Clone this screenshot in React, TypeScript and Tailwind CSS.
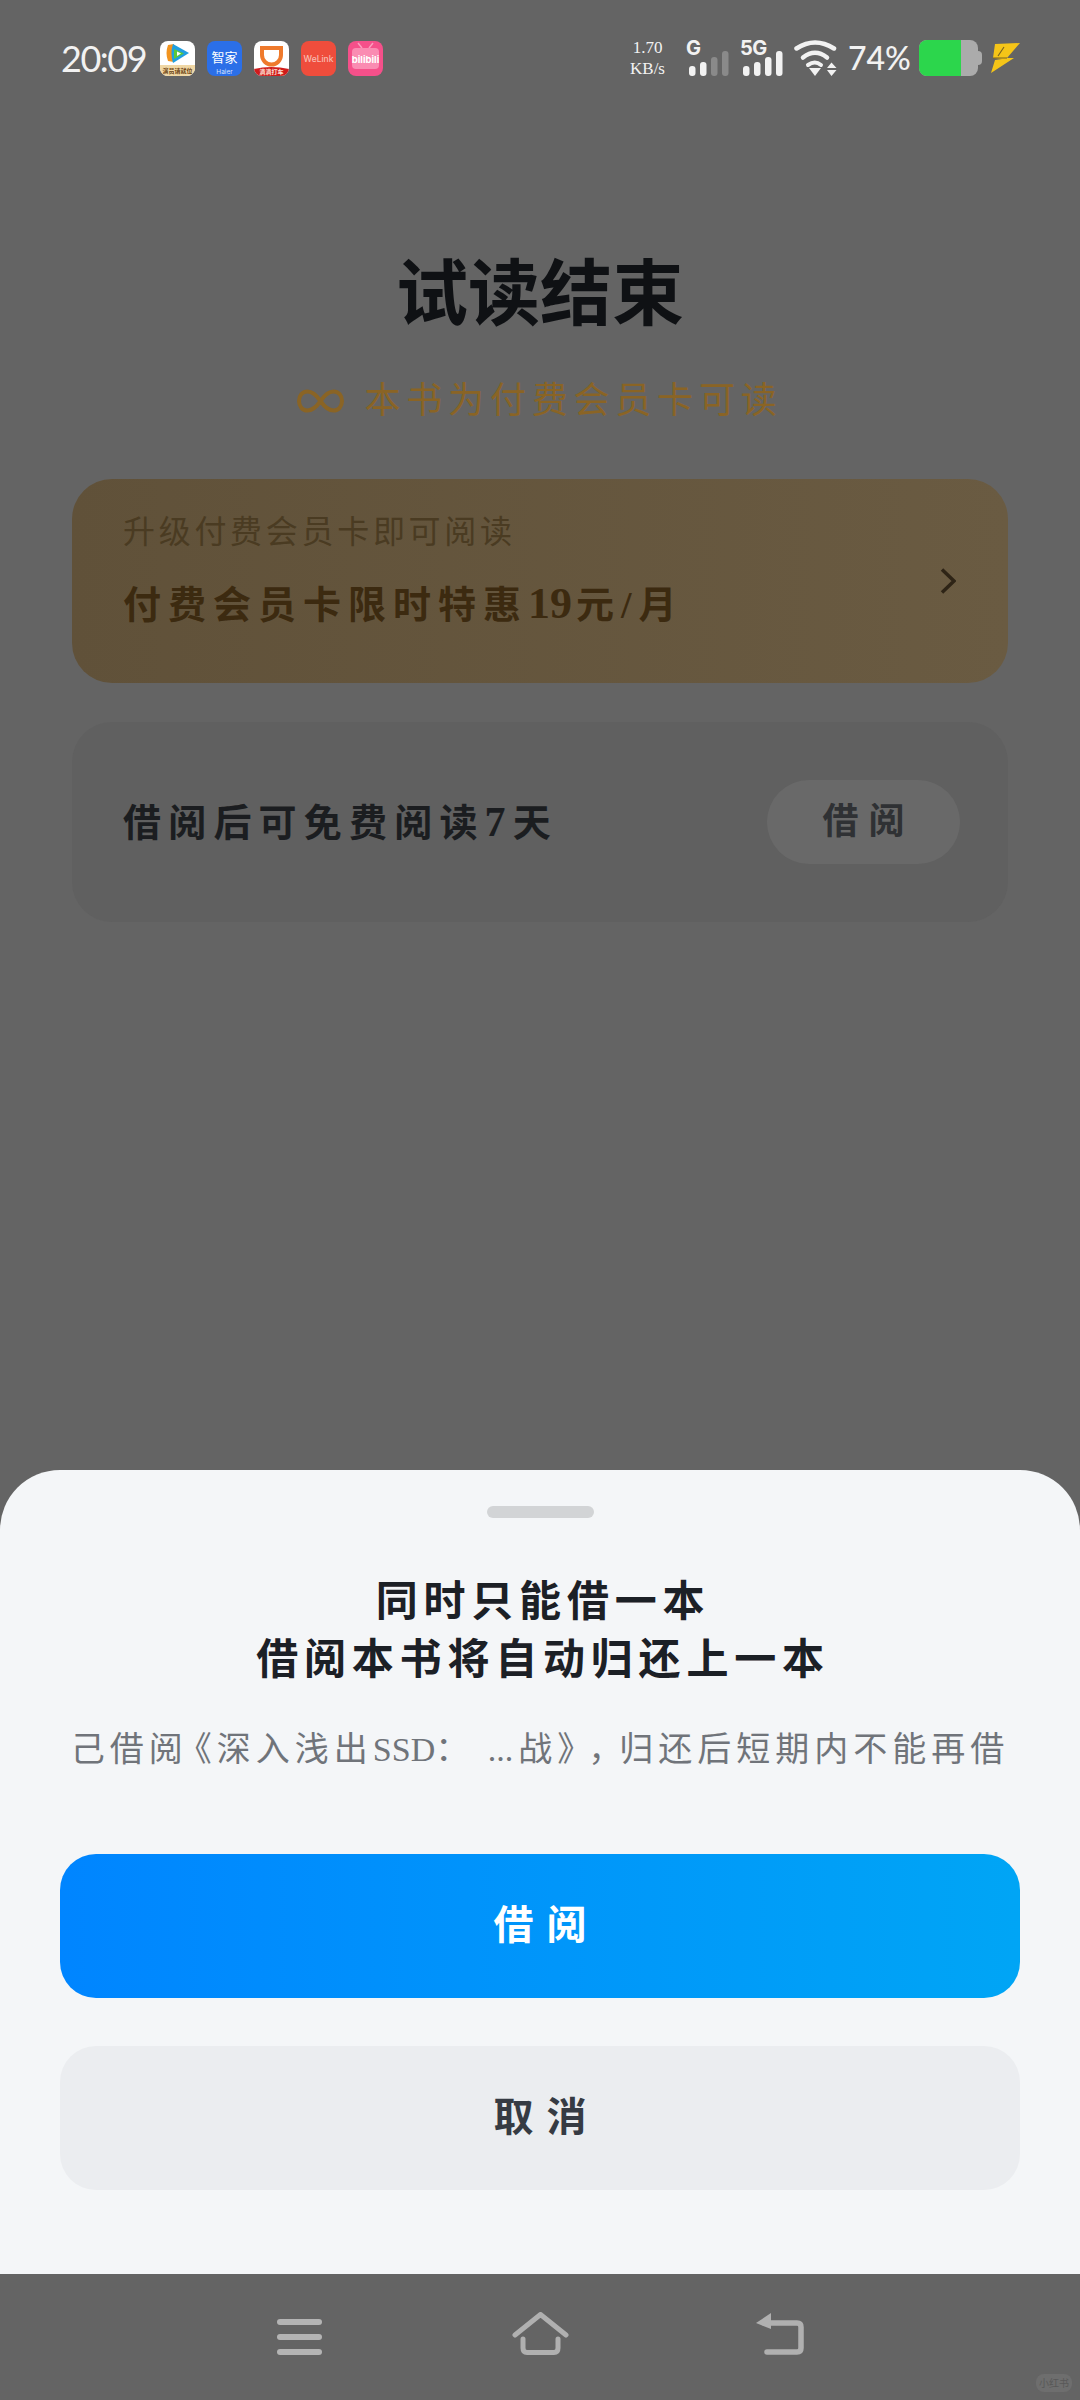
const serif = "font-['Liberation_Serif','Noto_Sans_CJK_SC',serif]";

function TencentIcon() {
  return (
    <svg width="35" height="35" viewBox="0 0 35 35" className="rounded-lg">
      <rect width="35" height="35" fill="#ffffff" />
      <path d="M8 4 L14 3 Q11 12 14 21 L8 20 Q5 12 8 4 Z" fill="#f2941f" />
      <path d="M13 3 L29 12 L13 22 Q10 12 13 3 Z" fill="#1f9fe0" />
      <path d="M14 8 L24 12.5 L14 18 Z" fill="#5cc83a" />
      <path d="M17 10.5 L21 12.5 L17 15 Z" fill="#ffffff" />
      <rect y="24" width="35" height="11" fill="#f0d7a4" />
      <text x="17.5" y="31.5" textAnchor="middle" fontSize="6" fontWeight="700" fill="#6b4212" fontFamily="Noto Sans CJK SC">
        演员请就位
      </text>
    </svg>
  );
}

function HaierIcon() {
  return (
    <svg width="35" height="35" viewBox="0 0 35 35" className="rounded-lg">
      <rect width="35" height="35" fill="#2b6fe8" />
      <text x="17.5" y="21" textAnchor="middle" fontSize="13" fill="#ffffff" fontFamily="Noto Sans CJK SC">
        智家
      </text>
      <text x="17.5" y="33" textAnchor="middle" fontSize="6.5" fill="#d5e4ff" fontFamily="Inter">
        Haier
      </text>
    </svg>
  );
}

function DidiIcon() {
  return (
    <svg width="35" height="35" viewBox="0 0 35 35" className="rounded-lg">
      <rect width="35" height="35" fill="#ffffff" />
      <path d="M8 7 H27 V14 A9.5 9.5 0 0 1 8 14 Z" fill="none" stroke="#ef7a2c" strokeWidth="4" />
      <path d="M0 28 Q17 24 35 28 V35 H0 Z" fill="#d01c1c" />
      <text x="17.5" y="33" textAnchor="middle" fontSize="6" fontWeight="700" fill="#ffe3d8" fontFamily="Noto Sans CJK SC">
        滴滴打车
      </text>
    </svg>
  );
}

function WeLinkIcon() {
  return (
    <svg width="35" height="35" viewBox="0 0 35 35" className="rounded-lg">
      <rect width="35" height="35" fill="#ef4d3c" />
      <text x="17.5" y="21" textAnchor="middle" fontSize="8.5" fontWeight="500" fill="#f8bdb2" fontFamily="Inter">
        WeLink
      </text>
    </svg>
  );
}

function BiliIcon() {
  return (
    <svg width="35" height="35" viewBox="0 0 35 35" className="rounded-lg">
      <rect width="35" height="35" fill="#f5508a" />
      <path d="M10 2 L14 7 M25 2 L21 7" stroke="#fa9dbd" strokeWidth="1.5" />
      <rect x="4" y="7" width="27" height="21" rx="4" fill="#fa8cb2" />
      <text x="17.5" y="22" textAnchor="middle" fontSize="9.5" fontWeight="700" fill="#ffffff" fontFamily="Inter">
        bilibili
      </text>
    </svg>
  );
}

function Signal({ label, dim }: { label: string; dim?: boolean }) {
  return (
    <div className="relative h-9 w-11">
      <span className="absolute left-0 top-[-2px] whitespace-nowrap font-['Inter',sans-serif] text-[20px] font-bold leading-[20px] tracking-[-0.5px] text-[#f2f2f2]">
        {label}
      </span>
      <svg width="44" height="36" viewBox="0 0 44 36">
        <rect x="3" y="26" width="6.5" height="10" rx="3" fill="#f2f2f2" />
        <rect x="14" y="22" width="6.5" height="14" rx="3" fill="#f2f2f2" />
        <rect x="25" y="17" width="6.5" height="19" rx="3" fill={dim ? "#8a8a8a" : "#f2f2f2"} />
        <rect x="36" y="11" width="6.5" height="25" rx="3" fill={dim ? "#8a8a8a" : "#f2f2f2"} />
      </svg>
    </div>
  );
}

function Wifi() {
  return (
    <svg width="43" height="36" viewBox="0 0 43 36" fill="none" stroke="#f2f2f2" strokeLinecap="round">
      <path d="M2.5 8.5 Q21 -3.5 40 8.5" strokeWidth="4.5" />
      <path d="M9 17.5 Q21 8 33 17.5" strokeWidth="4.5" />
      <path d="M14 25 Q21 20 27 25" strokeWidth="4" />
      <path d="M15 28 H27 L21 36 Z" fill="#f2f2f2" stroke="none" />
      <path d="M33 28 L37.5 22.5 L42.5 28 Z M33 30 H42.5 L37.5 36 Z" fill="#f2f2f2" stroke="none" />
    </svg>
  );
}

function Bolt() {
  return (
    <svg width="31" height="30" viewBox="0 0 31 30">
      <path d="M5 1 L30 0 L17 15 L24 15 L1 30 L5 17 L12 16 L3 15 Z" fill="#f5c518" />
      <path d="M3 15 L17 15 M14 4 L8 13" stroke="#7a6320" strokeWidth="1.2" fill="none" />
    </svg>
  );
}

function StatusBar() {
  return (
    <div className="flex h-[112px] items-center pt-1 pl-[61px] pr-[59px] text-[#f2f2f2]">
      <span className="w-[84px] whitespace-nowrap font-['Lato',sans-serif] text-[36px] leading-none tracking-[-1.5px]">20:09</span>
      <div className="ml-[15px] flex gap-3">
        <TencentIcon />
        <HaierIcon />
        <DidiIcon />
        <WeLinkIcon />
        <BiliIcon />
      </div>
      <div className="ml-auto flex items-center">
        <div className={`w-[37px] text-center ${serif} text-[17px] leading-[21px]`}>
          <div>1.70</div>
          <div className="whitespace-nowrap">KB/s</div>
        </div>
        <div className="ml-5">
          <Signal label="G" dim />
        </div>
        <div className="ml-2.5">
          <Signal label="5G" />
        </div>
        <div className="ml-2.5">
          <Wifi />
        </div>
        <span className="ml-[11px] w-[62px] whitespace-nowrap font-['Lato',sans-serif] text-[32px] font-medium leading-none">74%</span>
        <div className="ml-[9px] flex items-center">
          <div className="flex h-[36px] w-[59px] overflow-hidden rounded-lg bg-[#ababab]">
            <div className="w-[42px] bg-[#2cd64c]" />
          </div>
          <div className="h-[14px] w-1 rounded-r-sm bg-[#ababab]" />
        </div>
        <div className="ml-2">
          <Bolt />
        </div>
      </div>
    </div>
  );
}

function NavBar() {
  return (
    <div className="relative flex h-[126px] shrink-0 items-start bg-[#646464] pt-[38px]">
      <div className="ml-[277px] mt-[7px] flex w-[45px] flex-col gap-[9px]">
        <div className="h-1.5 rounded-full bg-[#b4b4b4]" />
        <div className="h-1.5 rounded-full bg-[#b4b4b4]" />
        <div className="h-1.5 rounded-full bg-[#b4b4b4]" />
      </div>
      <svg className="ml-[190px]" width="57" height="43" viewBox="0 0 57 43" fill="none" stroke="#b0b0b0" strokeLinecap="round" strokeLinejoin="round" strokeWidth="5">
        <path d="M3 23 L28.5 2.5 L54 23" />
        <path d="M11 27 V36 Q11 40.5 15 40.5 H42 Q46 40.5 46 36 V27" />
      </svg>
      <svg className="ml-[187px] mt-px" width="48" height="42" viewBox="0 0 48 42" fill="none" stroke="#b0b0b0" strokeLinecap="round" strokeLinejoin="round" strokeWidth="5.5">
        <path d="M8 10 H41 Q45 10 45 14 V35 Q45 39 41 39 H11" />
        <path d="M0 10 L15 0 V16 Z" fill="#b0b0b0" stroke="none" />
      </svg>
      {/* watermark */}
      <div className="absolute right-2 top-[100px] flex h-[18px] w-9 items-center justify-center rounded-lg bg-[#6e6e6e] font-['Noto_Sans_CJK_SC',sans-serif] text-[10px] leading-none text-[#585858]">
        小红书
      </div>
    </div>
  );
}

export default function App() {
  return (
    <div className={`flex h-[2400px] w-[1080px] flex-col overflow-hidden bg-[#646464] ${serif}`}>
      <StatusBar />

      <div className="px-[72px] pt-[147px]">
        <h1 className="text-center text-[72px] font-bold leading-[72px] text-[#0f1114]">试读结束</h1>
        <div className="mt-[46px] flex items-center justify-center gap-[20px] text-[36px] leading-[48px] tracking-[5.8px] text-[#8a6425]">
          <svg width="47" height="24" viewBox="0 0 47 24" fill="none" stroke="#8a6425" strokeWidth="4">
            <path d="M23.5 12 C18 4 14 2.5 10.5 2.5 C5.5 2.5 2 6.5 2 12 C2 17.5 5.5 21.5 10.5 21.5 C14 21.5 18 20 23.5 12 C29 4 33 2.5 36.5 2.5 C41.5 2.5 45 6.5 45 12 C45 17.5 41.5 21.5 36.5 21.5 C33 21.5 29 20 23.5 12 Z" />
          </svg>
          <span>本书为付费会员卡可读</span>
        </div>

        <div className="mt-[54px] flex h-[204px] items-center justify-between rounded-[40px] bg-linear-to-r from-[#605139] to-[#6a5b42] pl-[51px] pr-[52px]">
          <div className="pb-[22px]">
            <div className="text-[32px] leading-[44px] tracking-[3.7px] text-[#4a3b22]">升级付费会员卡即可阅读</div>
            <div className="mt-[25px] text-[38px] font-bold leading-[50px] tracking-[7px] text-[#3c2a10]">
              付费会员卡限时特惠<span className="mr-1 text-[44px] leading-[50px] tracking-normal">19</span>元/月
            </div>
          </div>
          <svg width="16" height="26" viewBox="0 0 16 26" fill="none" stroke="#2e2416" strokeWidth="3.5">
            <path d="M2 1.5 L14 13 L2 24.5" />
          </svg>
        </div>

        <div className="mt-[39px] flex h-[200px] items-center justify-between rounded-[40px] bg-[#606060] pl-[51px] pr-[48px]">
          <div className="text-[38px] font-bold leading-[50px] tracking-[7.2px] text-[#1b1d20]">
            借阅后可免费阅读<span className="text-[42px] leading-[50px]">7</span>天
          </div>
          <div className="flex h-[84px] w-[193px] items-center justify-center rounded-full bg-[#696969] pl-2.5 text-[36px] font-bold tracking-[10px] text-[#2f3134]">
            借阅
          </div>
        </div>
      </div>

      <div className="mt-auto flex h-[804px] shrink-0 flex-col items-center rounded-t-[60px] bg-[#f4f6f8] pt-9">
        <div className="h-3 w-[107px] rounded-md bg-[#d2d4d6]" />
        <h2 className="mt-[55px] pl-1.5 text-center text-[42px] font-bold leading-[58px] tracking-[5.8px] text-[#1c2026]">
          同时只能借一本
          <br />
          借阅本书将自动归还上一本
        </h2>
        <p className="mt-[37px] whitespace-nowrap text-[34px] leading-[48px] tracking-[5px] text-[#70747a]">
          己借阅<span className="pl-[7px] [font-feature-settings:'halt']">《</span>深入浅出<span className="tracking-normal">SSD</span>： <span className="mr-[5px] tracking-normal">...</span>战<span className="pr-[9px] [font-feature-settings:'halt']">》</span><span className="pr-[9px] [font-feature-settings:'halt']">，</span>归还后短期内不能再借
        </p>
        <button className="mt-20 h-[144px] w-[960px] rounded-[36px] bg-linear-to-r from-[#0085ff] to-[#00a5f5] pl-[13px] text-[40px] font-bold tracking-[13px] text-white">
          借阅
        </button>
        <button className="mt-12 h-[144px] w-[960px] rounded-[36px] bg-[#ebedf0] pl-[13px] text-[40px] font-bold tracking-[13px] text-[#363b43]">
          取消
        </button>
      </div>

      <NavBar />
    </div>
  );
}
